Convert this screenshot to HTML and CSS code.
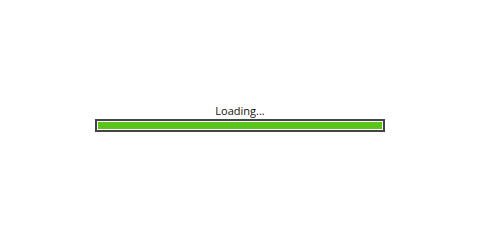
FILE: index.html
```html
<!DOCTYPE html>
<html lang="en">
<head>
    <meta charset="UTF-8">
    <title>Loading</title>
    <link rel="stylesheet" href="styles.css">
</head>
<body>
    <div class="loader">
        <div class="loader-text">Loading...</div>
        <div class="loader-bar">
            <div class="loader-fill" style="width: 100%"></div>
        </div>
    </div>
</body>
</html>
```
FILE: styles.css
```css
body {
    margin: 0;
    background-color: #fff;
    font-family: 'Open Sans', 'Liberation Sans', sans-serif;
    color: #111;
}
.loader {
    display: flex;
    flex-direction: column;
    align-items: center;
    padding-top: 103px;
}
.loader-text {
    font-size: 11px;
    line-height: 15px;
    margin-bottom: 1px;
}
.loader-bar {
    width: 284px;
    border: 2px solid #444;
    padding: 1px;
    background-color: #fff;
}
.loader-fill {
    height: 7px;
    background-color: #5bc41c;
}
```
